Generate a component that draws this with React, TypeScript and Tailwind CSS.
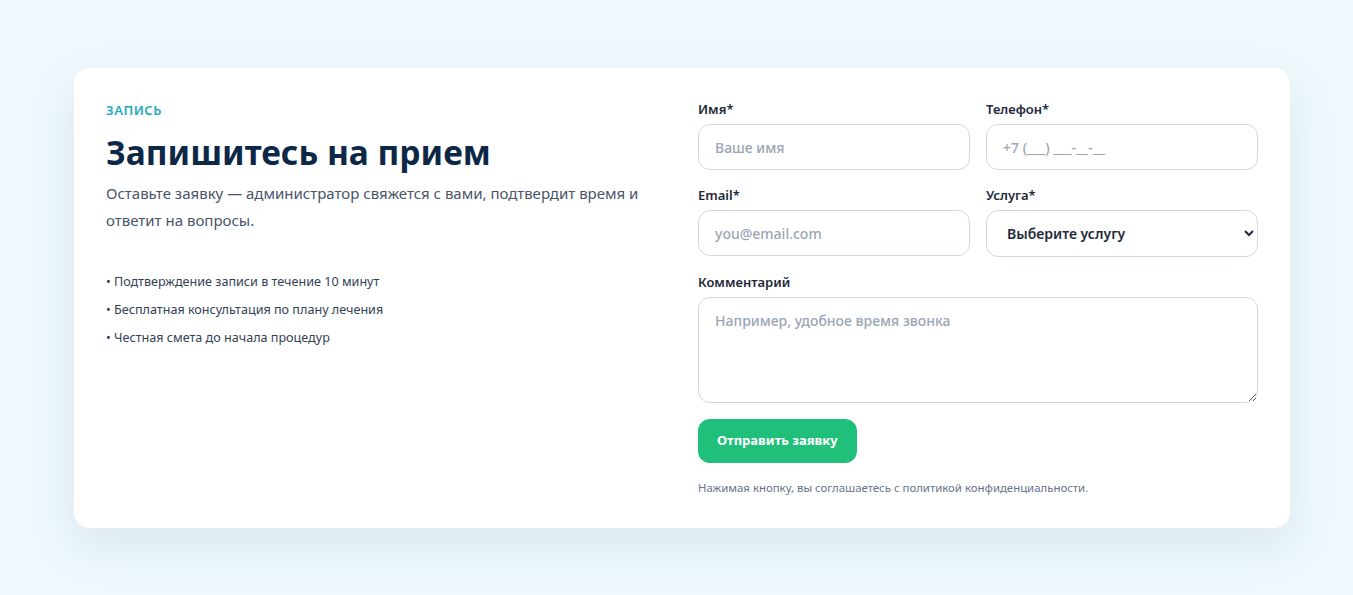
import React from "react";

const font = { fontFamily: '"Noto Sans", "Open Sans", sans-serif' };

function Field({ label, children }: { label: string; children: React.ReactNode }) {
  return (
    <label className="flex flex-col gap-[6px]">
      <span className="text-[13px] font-semibold leading-[18px] text-[#1e293b]">{label}</span>
      {children}
    </label>
  );
}

const inputCls =
  "h-[46px] w-full rounded-[12px] border border-[#cfd8e3] bg-white px-4 text-[14px] font-medium text-[#1e293b] outline-none placeholder:text-[#9aa5b4]";

export default function App() {
  return (
    <div className="min-h-[595px] w-full bg-[#eff9fd] pt-[68px]" style={font}>
      <div className="ml-[74px] w-[1216px] rounded-[16px] bg-white p-8 shadow-[0_18px_48px_rgba(30,64,110,0.10)]">
        <div className="grid grid-cols-2 gap-8">
          <div>
            <div className="text-[13px] font-semibold uppercase leading-[20px] tracking-[0.04em] text-[#1fa9c2]">
              Запись
            </div>
            <h1 className="mt-[10px] text-[33.5px] font-bold leading-[44px] text-[#0d2847]">
              Запишитесь на прием
            </h1>
            <p className="mt-[6px] text-[15px] leading-[27px] text-[#475569]">
              Оставьте заявку — администратор свяжется с вами, подтвердит время и ответит на вопросы.
            </p>
            <ul className="mt-[39px] flex flex-col gap-[10px] text-[12.6px] leading-[18px] text-[#334155]">
              <li>• Подтверждение записи в течение 10 минут</li>
              <li>• Бесплатная консультация по плану лечения</li>
              <li>• Честная смета до начала процедур</li>
            </ul>
          </div>

          <form className="flex flex-col" onSubmit={(e) => e.preventDefault()}>
            <div className="grid grid-cols-2 gap-x-4 gap-y-4">
              <Field label="Имя*">
                <input className={inputCls} placeholder="Ваше имя" />
              </Field>
              <Field label="Телефон*">
                <input className={inputCls} placeholder="+7 (___) ___-__-__" />
              </Field>
              <Field label="Email*">
                <input className={inputCls} placeholder="you@email.com" />
              </Field>
              <Field label="Услуга*">
                <select
                  className="h-[47px] w-full rounded-[12px] border border-[#cfd8e3] bg-white pl-4 pr-2 text-[14px] font-semibold text-[#1e293b] outline-none"
                  defaultValue=""
                >
                  <option value="">Выберите услугу</option>
                  <option>Консультация</option>
                  <option>Лечение</option>
                </select>
              </Field>
            </div>
            <div className="mt-4">
              <Field label="Комментарий">
                <textarea
                  className="h-[106px] w-full rounded-[12px] border border-[#cfd8e3] bg-white px-4 py-3 text-[14px] font-medium text-[#1e293b] outline-none placeholder:text-[#9aa5b4]"
                  placeholder="Например, удобное время звонка"
                />
              </Field>
            </div>
            <div className="mt-4">
              <button
                type="submit"
                className="h-[44px] rounded-[12px] bg-[#21c07a] px-[19px] text-[13px] font-bold text-white"
              >
                Отправить заявку
              </button>
            </div>
            <p className="mt-[17px] text-[11.4px] leading-[16px] text-[#64748b]">
              Нажимая кнопку, вы соглашаетесь с политикой конфиденциальности.
            </p>
          </form>
        </div>
      </div>
    </div>
  );
}
